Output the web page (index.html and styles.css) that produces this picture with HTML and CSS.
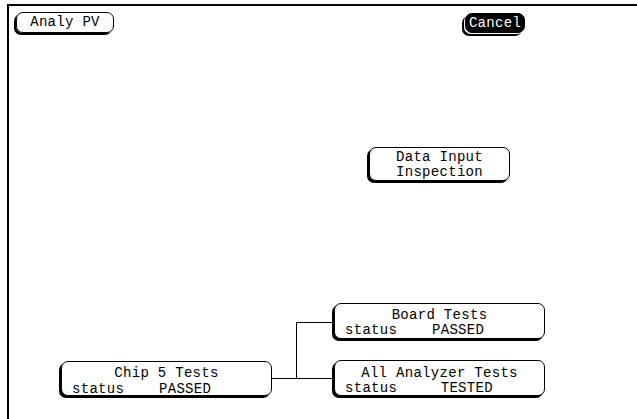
FILE: index.html
```html
<!DOCTYPE html>
<html>
<head>
<meta charset="utf-8">
<link rel="stylesheet" href="styles.css">
</head>
<body>
<div class="screen">
  <div class="topbar">
    <div class="btn">Analy PV</div>
    <div class="btn btn-dark">Cancel</div>
  </div>
  <div class="canvas">
    <div class="node node-data">Data Input<br>Inspection</div>
    <div class="node node-test node-board"><div class="title">Board Tests</div><div class="status">status    PASSED</div></div>
    <div class="node node-test node-all"><div class="title">All Analyzer Tests</div><div class="status">status     TESTED</div></div>
    <div class="node node-test node-chip"><div class="title">Chip 5 Tests</div><div class="status">status    PASSED</div></div>
    <div class="line line-h1"></div>
    <div class="line line-v"></div>
    <div class="line line-h2"></div>
  </div>
</div>
</body>
</html>
```
FILE: styles.css
```css
html, body {
  margin: 0;
  padding: 0;
  background: #fff;
}
body {
  width: 637px;
  height: 419px;
  overflow: hidden;
  font-family: "Liberation Mono", "DejaVu Sans Mono", monospace;
  font-size: 14px;
  letter-spacing: 0.3px;
  color: #000;
}
.screen {
  position: relative;
  margin: 4px 0 0 7px;
  height: 415px;
  border-top: 2px solid #000;
  border-left: 2px solid #000;
  box-sizing: border-box;
}
.topbar {
  display: flex;
  justify-content: space-between;
  align-items: flex-start;
  padding: 6px 112px 0 7px;
}
.btn {
  box-sizing: border-box;
  height: 21px;
  line-height: 19px;
  width: 98px;
  text-align: center;
  border: 1px solid #000;
  border-radius: 7px;
  box-shadow: -2px 2px 0 #000;
}
.btn-dark {
  width: 60px;
  height: 20px;
  line-height: 18px;
  margin-top: 1px;
  background: #000;
  color: #fff;
  box-shadow: -1px 1px 0 #fff, -3px 3px 0 #000;
}
.canvas {
  position: absolute;
  left: 0;
  top: 0;
  right: 0;
  bottom: 0;
}
.node {
  position: absolute;
  box-sizing: border-box;
  border: 1px solid #000;
  border-radius: 7px;
  box-shadow: -2px 2px 0 #000;
  background: #fff;
}
.node-data {
  left: 360px;
  top: 141px;
  width: 141px;
  height: 34px;
  text-align: center;
  line-height: 15px;
  padding-top: 2px;
}
.node-test {
  width: 211px;
  height: 36px;
  line-height: 15px;
  padding: 4px 0 0 10px;
}
.node-test .title {
  text-align: center;
  padding-right: 10px;
}
.node-test .status {
  white-space: pre;
}
.node-board { left: 325px; top: 297px; }
.node-all { left: 325px; top: 354px; padding-top: 5px; }
.node-chip { left: 52px; top: 355px; height: 35px; line-height: 16px; padding-top: 3px; }
.line {
  position: absolute;
  background: #000;
}
.line-h1 { left: 263px; top: 372px; width: 60px; height: 1px; }
.line-v { left: 287px; top: 316px; width: 1px; height: 57px; }
.line-h2 { left: 287px; top: 316px; width: 36px; height: 1px; }
```
